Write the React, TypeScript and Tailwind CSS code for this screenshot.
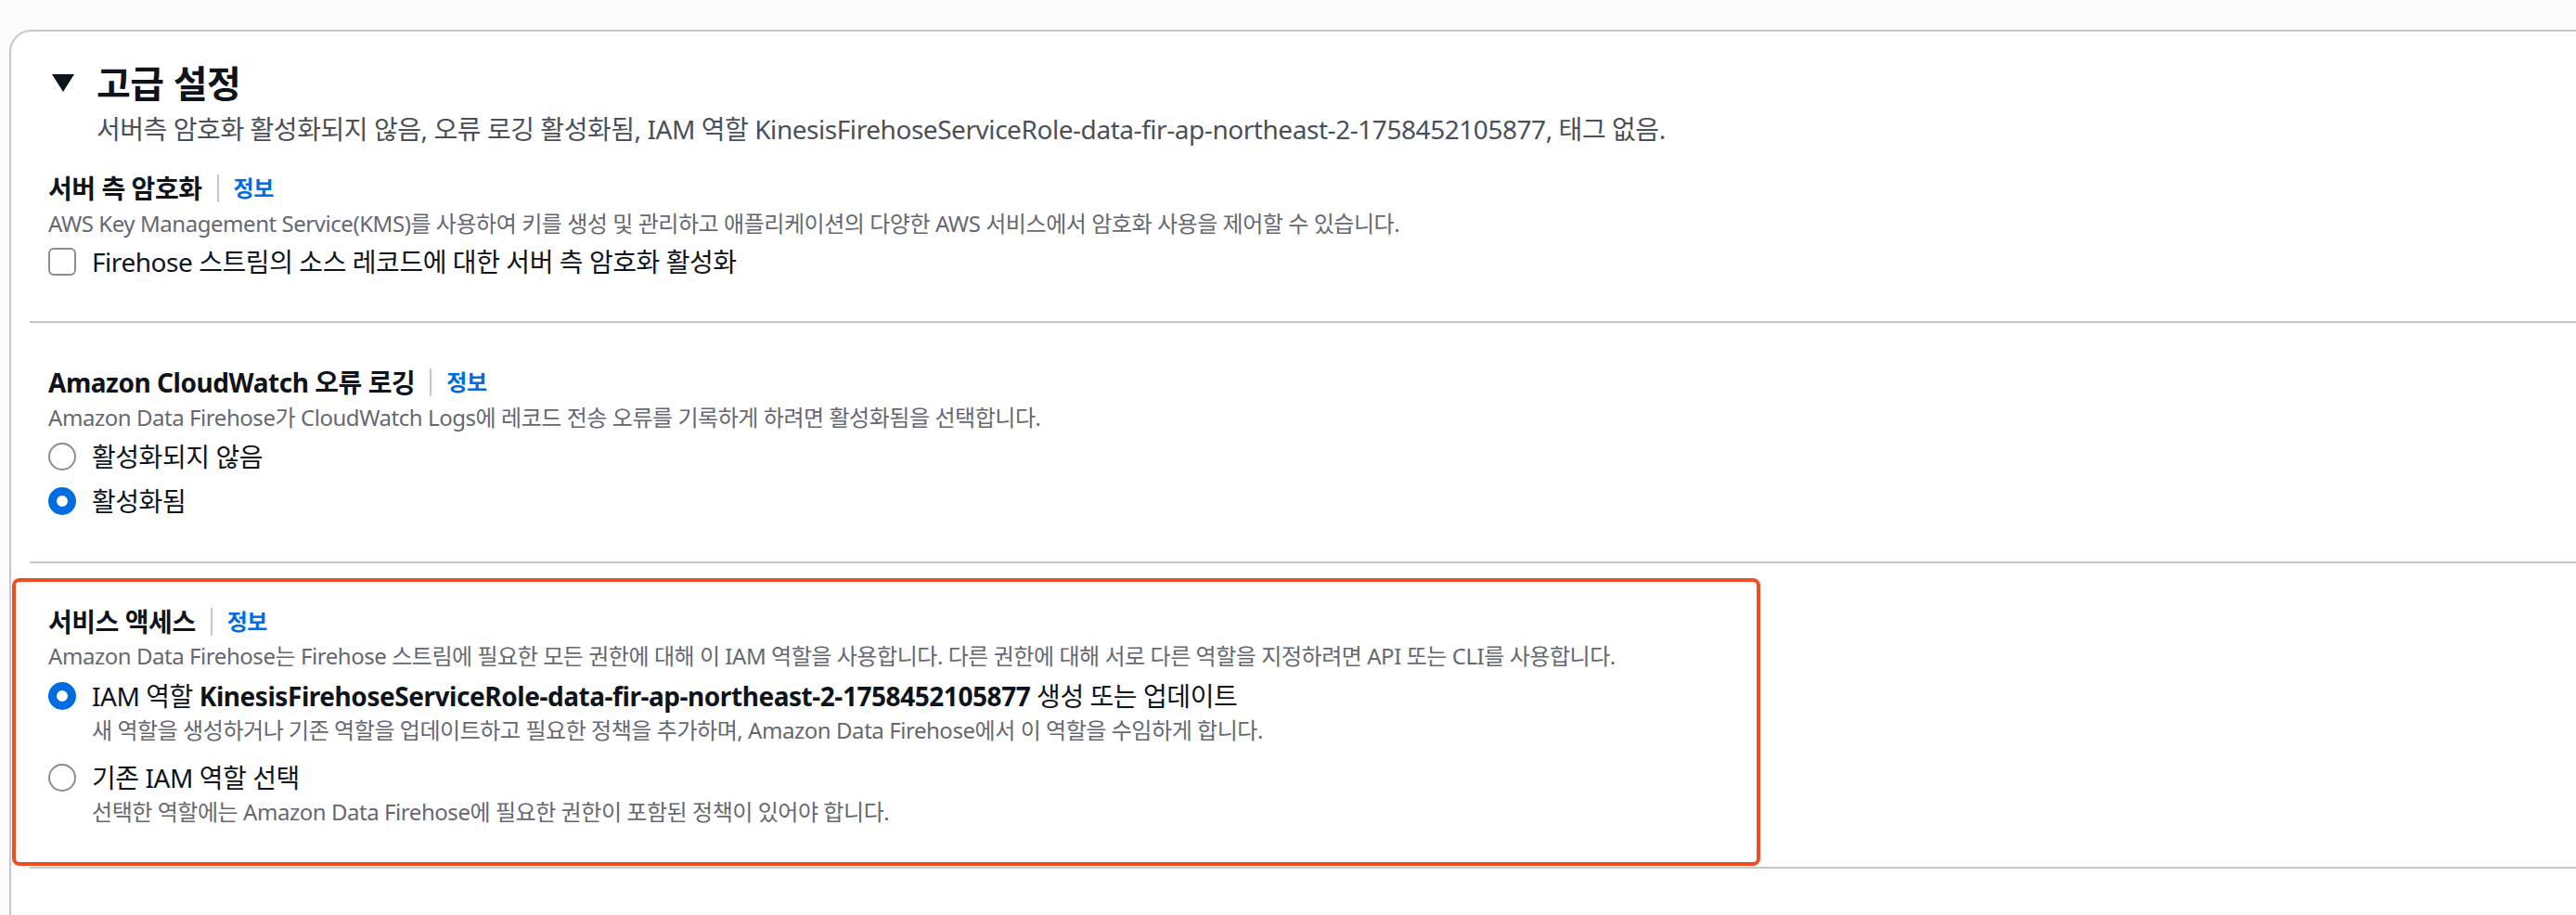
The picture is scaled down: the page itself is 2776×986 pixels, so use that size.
import React from 'react';

const Radio: React.FC<{ checked?: boolean }> = ({ checked }) =>
  checked ? (
    <span className="block w-[30px] h-[30px] shrink-0 rounded-full border-[9px] border-[#006ce0] bg-white" />
  ) : (
    <span className="block w-[30px] h-[30px] shrink-0 rounded-full border-2 border-[#8c8c94] bg-white" />
  );

const FieldLabel: React.FC<{ label: string }> = ({ label }) => (
  <div className="flex items-center h-[40px]">
    <span className="text-[28px] font-bold text-[#0f141a] leading-[40px]">{label}</span>
    <span className="w-[2px] h-[30px] bg-[#c6c6cd] mx-[16px]" />
    <span className="text-[24px] font-bold text-[#006ce0] leading-[32px]">정보</span>
  </div>
);

const App: React.FC = () => {
  return (
    <div className="w-full h-[986px] overflow-hidden bg-[#fafafa] pt-[32px] pl-[10px] font-['Noto_Sans','Noto_Sans_CJK_KR',sans-serif] tracking-[-0.028em]">
      <div className="w-[2820px] min-h-[1200px] bg-white border-2 border-[#c6c6cd] rounded-[24px]">
        {/* Header */}
        <div className="pt-[32px] pl-[44px]">
          <div className="flex items-center h-[48px]">
            <svg width="24" height="20" viewBox="0 0 24 20" className="shrink-0">
              <path d="M0 0 H24 L12 19 Z" fill="#0f141a" />
            </svg>
            <h2 className="ml-[24px] text-[40px] font-bold text-[#0f141a] leading-[48px]">고급 설정</h2>
          </div>
          <p className="ml-[48px] mt-[5px] text-[28px] text-[#4b4f58] leading-[40px]">
            서버측 암호화 활성화되지 않음, 오류 로깅 활성화됨, IAM 역할 KinesisFirehoseServiceRole-data-fir-ap-northeast-2-1758452105877, 태그 없음.
          </p>
        </div>

        {/* Server-side encryption */}
        <div className="ml-[20px] pl-[20px] pt-[24px] pb-[44px] border-b-2 border-[#c6c6cd]">
          <FieldLabel label="서버 측 암호화" />
          <p className="mt-[2px] text-[24px] text-[#656871] leading-[32px]">
            AWS Key Management Service(KMS)를 사용하여 키를 생성 및 관리하고 애플리케이션의 다양한 AWS 서비스에서 암호화 사용을 제어할 수 있습니다.
          </p>
          <label className="mt-[5px] flex items-center gap-[17px] h-[40px]">
            <span className="block w-[30px] h-[30px] shrink-0 rounded-[6px] border-2 border-[#8c8c94] bg-white" />
            <span className="text-[28px] text-[#0f141a] leading-[40px]">Firehose 스트림의 소스 레코드에 대한 서버 측 암호화 활성화</span>
          </label>
        </div>

        {/* CloudWatch error logging */}
        <div className="ml-[20px] pl-[20px] pt-[44px] pb-[45px] border-b-2 border-[#c6c6cd]">
          <FieldLabel label="Amazon CloudWatch 오류 로깅" />
          <p className="mt-[2px] text-[24px] text-[#656871] leading-[32px]">
            Amazon Data Firehose가 CloudWatch Logs에 레코드 전송 오류를 기록하게 하려면 활성화됨을 선택합니다.
          </p>
          <div className="mt-[6px] flex flex-col gap-[8px]">
            <label className="flex items-center gap-[17px] h-[40px]">
              <Radio />
              <span className="text-[28px] text-[#0f141a] leading-[40px]">활성화되지 않음</span>
            </label>
            <label className="flex items-center gap-[17px] h-[40px]">
              <Radio checked />
              <span className="text-[28px] text-[#0f141a] leading-[40px]">활성화됨</span>
            </label>
          </div>
        </div>

        {/* Service access */}
        <div className="relative ml-[20px] pl-[20px] pt-[43px] pb-[43px] border-b-2 border-[#c6c6cd]">
          <div className="absolute left-[-19px] top-[16px] w-[1884px] h-[310px] border-4 border-[#f04d23] rounded-[8px] pointer-events-none" />
          <FieldLabel label="서비스 액세스" />
          <p className="mt-[1px] text-[24px] text-[#656871] leading-[32px]">
            Amazon Data Firehose는 Firehose 스트림에 필요한 모든 권한에 대해 이 IAM 역할을 사용합니다. 다른 권한에 대해 서로 다른 역할을 지정하려면 API 또는 CLI를 사용합니다.
          </p>
          <div className="mt-[7px] flex flex-col gap-[15px]">
            <div>
              <label className="flex items-center gap-[17px] h-[40px]">
                <Radio checked />
                <span className="text-[28px] text-[#0f141a] leading-[40px]">
                  IAM 역할 <span className="font-bold">KinesisFirehoseServiceRole-data-fir-ap-northeast-2-1758452105877</span> 생성 또는 업데이트
                </span>
              </label>
              <p className="ml-[47px] mt-[1px] text-[24px] text-[#656871] leading-[32px]">
                새 역할을 생성하거나 기존 역할을 업데이트하고 필요한 정책을 추가하며, Amazon Data Firehose에서 이 역할을 수임하게 합니다.
              </p>
            </div>
            <div>
              <label className="flex items-center gap-[17px] h-[40px]">
                <Radio />
                <span className="text-[28px] text-[#0f141a] leading-[40px]">기존 IAM 역할 선택</span>
              </label>
              <p className="ml-[47px] mt-[1px] text-[24px] text-[#656871] leading-[32px]">
                선택한 역할에는 Amazon Data Firehose에 필요한 권한이 포함된 정책이 있어야 합니다.
              </p>
            </div>
          </div>
        </div>
      </div>
    </div>
  );
};

export default App;
